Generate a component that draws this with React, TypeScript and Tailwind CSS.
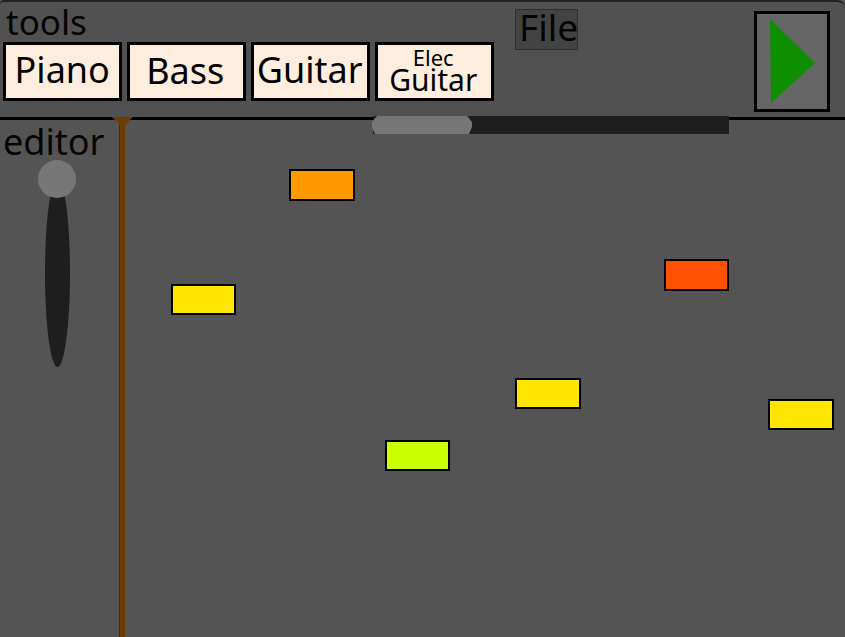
const notes = [
  { x: 289, y: 169, w: 66, h: 32, c: "bg-[#ff9900]" },
  { x: 171, y: 284, w: 65, h: 31, c: "bg-[#ffe600]" },
  { x: 664, y: 259, w: 65, h: 32, c: "bg-[#ff5100]" },
  { x: 515, y: 378, w: 66, h: 31, c: "bg-[#ffe600]" },
  { x: 768, y: 399, w: 66, h: 31, c: "bg-[#ffe600]" },
  { x: 385, y: 440, w: 65, h: 31, c: "bg-[#ccff00]" },
];

function Tool({ children }: { children: React.ReactNode }) {
  return (
    <div className="w-[118.5px] h-[59px] border-[3px] border-black bg-[#ffeede] flex flex-col items-center justify-center text-black whitespace-nowrap">
      {children}
    </div>
  );
}

export default function App() {
  return (
    <div
      className="w-[845px] h-[637px] overflow-hidden relative bg-[#545454] text-black flex flex-col"
      style={{ fontFamily: '"Noto Sans", sans-serif' }}
    >
      <header className="h-[120px] shrink-0 border-b-[3px] border-b-black border-t-[2px] border-t-[#222222] rounded-tr-lg rounded-tl-sm flex bg-[#515151]">
        <div className="w-[515px] shrink-0 pl-[3px]">
          <div className="pl-[3px] text-[35px] leading-[40px] text-[#050505]">tools</div>
          <div className="flex gap-[5.5px]">
            <Tool><span className="text-[36px] leading-[40px] -mt-[4px]">Piano</span></Tool>
            <Tool><span className="text-[36px] leading-[40px] -mt-[2px] -ml-[2px]">Bass</span></Tool>
            <Tool><span className="text-[36px] leading-[40px] -mt-[4px] -ml-[1px]">Guitar</span></Tool>
            <Tool>
              <span className="text-[22px] leading-[20px] -mt-[4px] -ml-[2px]">Elec</span>
              <span className="text-[30px] leading-[26px] -ml-[2px]">Guitar</span>
            </Tool>
          </div>
        </div>
        <div className="w-[63px] h-[41px] mt-[7px] border border-[#2e2e2e] bg-[#434343] text-[37px] leading-[34px] text-[#050505] whitespace-nowrap shrink-0 pl-[3px]">
          File
        </div>
        <div className="ml-[176px] mt-[9px] w-[76px] h-[101px] border-[3px] border-black bg-[#666666] shrink-0">
          <svg width="70" height="95" viewBox="0 0 70 95" className="block">
            <polygon points="13,5 58,49 14,89" fill="#0d8f00" />
          </svg>
        </div>
      </header>
      <main className="relative flex-1">
        <div className="absolute left-[3px] top-[2px] text-[36px] leading-[40px] text-[#050505]">editor</div>
        <div className="absolute left-[45px] top-[59px] w-[25px] h-[188px] bg-[#1e1e1e] rounded-[50%]" />
        <div className="absolute left-[38px] top-[40px] w-[38px] h-[38px] bg-[#767676] rounded-full" />
        <div className="absolute left-[119px] top-[-3px] w-[6px] h-[520px] bg-[#6e3c00] border-l border-l-[#3d2a14]" />
        <svg className="absolute left-[112px] top-[-3px]" width="21" height="10" viewBox="0 0 21 10">
          <polygon points="0,0 21,0 12,9 9,9" fill="#6e3c00" />
        </svg>
        <div className="absolute left-[373px] top-[-4px] w-[356px] h-[18px] bg-[#1e1e1e]" />
        <svg className="absolute left-[372px] top-[-4px]" width="100" height="18" viewBox="0 0 100 18">
          <polygon points="5,0 95,0 100,6 100,11 97,18 3,18 0,11 0,6" fill="#767676" />
        </svg>
        {notes.map((n) => (
          <div
            key={n.x}
            className={`absolute border-2 border-black ${n.c}`}
            style={{ left: n.x, top: n.y - 120, width: n.w, height: n.h }}
          />
        ))}
      </main>
    </div>
  );
}
